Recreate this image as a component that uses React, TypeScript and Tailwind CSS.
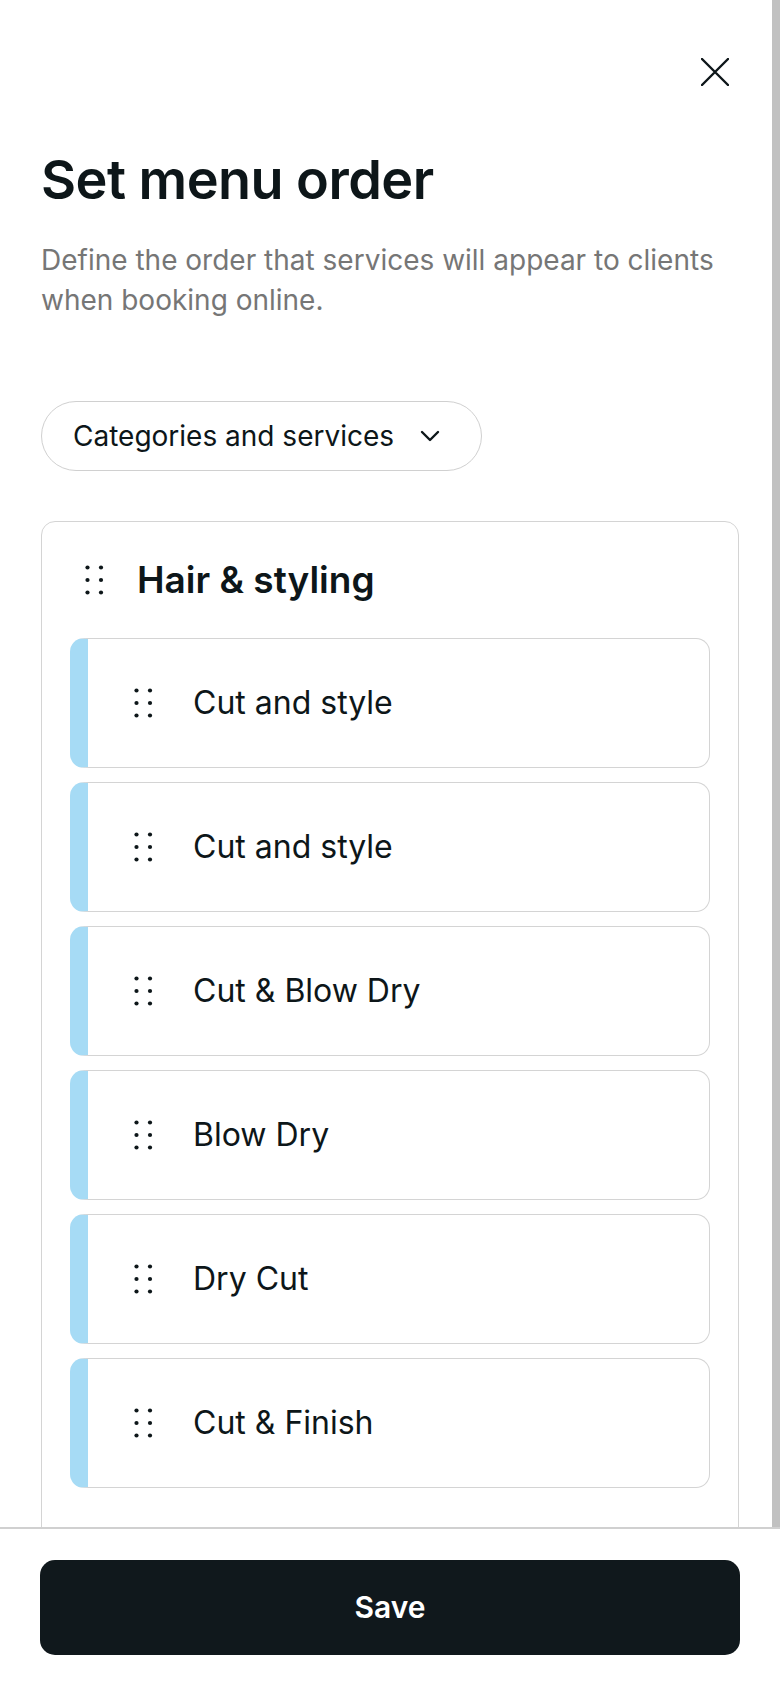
import React from 'react';

const services = ['Cut and style', 'Cut and style', 'Cut & Blow Dry', 'Blow Dry', 'Dry Cut', 'Cut & Finish'];

const DragDots = () => (
  <svg width="19" height="30" viewBox="0 0 19 30" className="shrink-0">
    {[2.5, 15, 27.5].map((y) =>
      [2.5, 16].map((x) => <circle key={`${x}-${y}`} cx={x} cy={y} r="2.1" fill="#0d1619" />)
    )}
  </svg>
);

const ServiceRow = ({ name }: { name: string }) => (
  <div className="flex h-[130px] items-center rounded-[14px] border-[1.5px] border-l-[18px] border-[#d4d4d4] border-l-[#a6dbf5] bg-white pl-[46px]">
    <DragDots />
    <span className="ml-[40px] text-[32px] leading-none text-[#0d1619]">{name}</span>
  </div>
);

export default function App() {
  return (
    <div
      className="relative h-[1688px] w-[780px] overflow-hidden bg-white"
      style={{ fontFamily: 'Inter, "Noto Sans", sans-serif' }}
    >
      <div className="flex flex-col px-[41px]">
        <div className="flex justify-end pt-[58px] pr-[10px]">
          <svg width="28" height="28" viewBox="0 0 28 28">
            <path d="M1 1 27 27M27 1 1 27" stroke="#0d1619" strokeWidth="2.4" strokeLinecap="round" fill="none" />
          </svg>
        </div>

        <h1 className="mt-[62px] text-[54px] font-semibold leading-[64px] tracking-[-0.01em] text-[#0d1619]">
          Set menu order
        </h1>
        <p className="mt-[28px] text-[28px] leading-[40px] text-[#767676]">
          Define the order that services will appear to clients when booking online.
        </p>

        <div className="mt-[81px] flex h-[70px] w-[441px] items-center rounded-full border-[1.5px] border-[#d0d0d0] pl-[31px]">
          <span className="text-[28px] text-[#0d1619]">Categories and services</span>
          <svg width="20" height="12" viewBox="0 0 20 12" className="ml-[26px]">
            <path d="M2 2 10 10 18 2" stroke="#0d1619" strokeWidth="2.4" strokeLinecap="round" strokeLinejoin="round" fill="none" />
          </svg>
        </div>

        <div className="mt-[50px] rounded-[14px] border-[1.5px] border-[#d4d4d4] px-[28px] pt-[36px] pb-[120px]">
          <div className="flex h-[44px] items-center pl-[15px]">
            <DragDots />
            <span className="ml-[33px] text-[37px] font-semibold text-[#0d1619]">Hair &amp; styling</span>
          </div>
          <div className="mt-[36px] flex flex-col gap-[14px]">
            {services.map((s, i) => (
              <ServiceRow key={i} name={s} />
            ))}
          </div>
        </div>
      </div>

      <div className="absolute right-0 top-0 h-[1568px] w-[8px] bg-[#c1c1c1]" />

      <div className="absolute inset-x-0 bottom-0 h-[161px] border-t-2 border-[#d0d0d0] bg-white px-[40px] pt-[31px]">
        <button className="flex h-[95px] w-full items-center justify-center rounded-[15px] bg-[#10181c] text-[30px] font-semibold text-white">
          Save
        </button>
      </div>
    </div>
  );
}
